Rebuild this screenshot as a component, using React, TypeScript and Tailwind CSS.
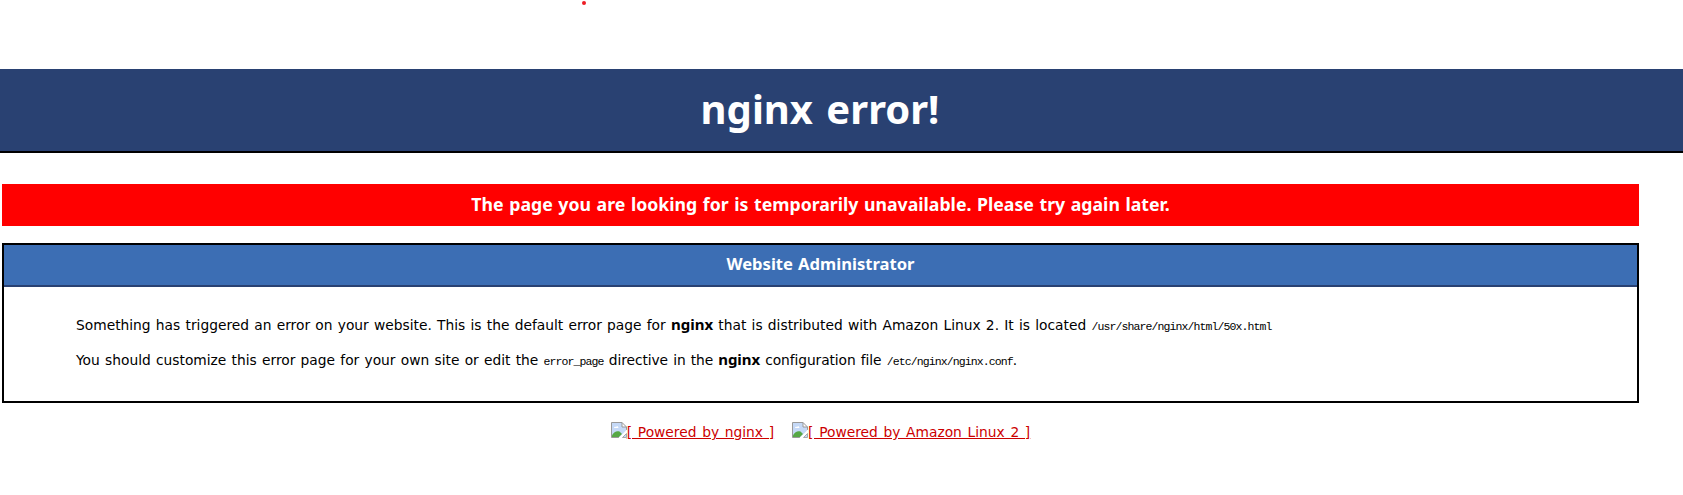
import type { ReactNode } from "react";

function Code({ children }: { children: ReactNode }) {
  return (
    <span className="font-['Liberation_Mono',monospace] text-[11.5px] leading-none tracking-[-0.9px] [word-spacing:0]">
      {children}
    </span>
  );
}

function Strong({ children }: { children: ReactNode }) {
  return <b className="font-['Noto_Sans',sans-serif] text-[15px] leading-none">{children}</b>;
}

function BrokenImage() {
  return (
    <svg className="mt-[3px] block h-4 w-4 shrink-0" viewBox="0 0 16 16">
      <path d="M.5.5H11L15.5 5V15.5H.5Z" fill="#c5d9f7" />
      <path d="M1 15V13.2C3 9.5 6 8.5 8.5 9.5L11 12L8 15Z" fill="#56a845" />
      <path d="M3 6C3 4.7 4.6 4.4 5 5C5.6 3.6 7.6 4.2 7.4 6Z" fill="#fff" />
      <path d="M11 .5V5H15.5Z" fill="#fff" />
      <path d="M.5 15.5V.5H11L15.5 5V8M11 .5V5H15.5M.5 15.5H8" fill="none" stroke="#999" />
      <path d="M16 7.5L7.5 16H16Z" fill="#fff" />
      <path d="M15.5 11.5V15.5H11.5Z" fill="#c5d9f7" stroke="#999" strokeWidth=".8" />
    </svg>
  );
}

export default function App() {
  return (
    <div className="flex h-[495px] flex-col overflow-hidden bg-white font-['DejaVu_Sans',sans-serif] text-[13.8px] text-black [word-spacing:0.85px]">
      <div className="flex h-[69px] shrink-0 items-start pl-[582px]">
        <span className="mt-[1px] size-1 rounded-full bg-[#ed1c24]" />
      </div>
      <h1 className="h-[84px] shrink-0 border-b-2 border-black bg-[#294172] pr-[43px] text-center font-['Noto_Sans',sans-serif] text-[40px] leading-[80px] font-bold text-white [word-spacing:3px]">
        nginx error!
      </h1>
      <main className="mt-[31px] ml-[2px] w-[1637px]">
        <h3 className="h-[42px] bg-[#ff0000] text-center font-['Noto_Sans',sans-serif] text-[17.7px] leading-[40px] font-bold text-white [word-spacing:1px]">
          The page you are looking for is temporarily unavailable. Please try again later.
        </h3>
        <section className="mt-[17px] h-[160px] border-2 border-black">
          <h2 className="h-[42px] border-b-2 border-[#294172] bg-[#3c6eb4] text-center font-['Noto_Sans',sans-serif] text-[16.6px] leading-[38px] font-bold text-white">
            Website Administrator
          </h2>
          <div className="pt-[21px] pl-[72px] leading-[35px]">
            <p className="h-[35px]">
              Something has triggered an error on your website. This is the default error page for{" "}
              <Strong>nginx</Strong> that is distributed with Amazon Linux 2. It is located{" "}
              <Code>/usr/share/nginx/html/50x.html</Code>
            </p>
            <p className="h-[35px]">
              You should customize this error page for your own site or edit the <Code>error_page</Code>
              <span className="tracking-[-0.08px]">
                {" "}
                directive in the <Strong>nginx</Strong> configuration file{" "}
              </span>
              <Code>/etc/nginx/nginx.conf</Code>.
            </p>
          </div>
        </section>
        <footer className="mt-[16px] flex justify-center gap-[18px] leading-[26px] text-[#cc0000] [word-spacing:1.3px]">
          <a className="flex" href="#nginx">
            <BrokenImage />
            <span className="underline">[ Powered by nginx ]</span>
          </a>
          <a className="flex" href="#amazon">
            <BrokenImage />
            <span className="underline">[ Powered by Amazon Linux 2 ]</span>
          </a>
        </footer>
      </main>
    </div>
  );
}
